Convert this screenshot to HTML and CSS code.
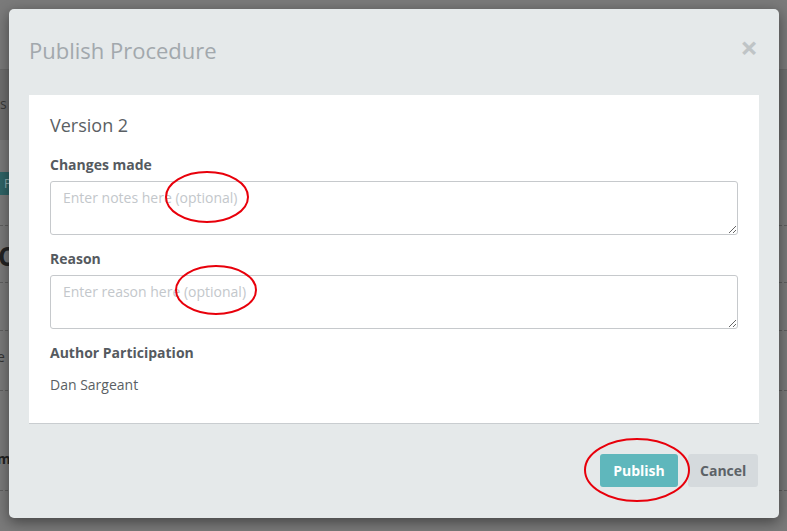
FILE: index.html
```
<!DOCTYPE html>
<html>
	<head>
		<meta charset="UTF-8">
		<title>Publish Procedure</title>
		<link rel="stylesheet" href="styles.css">
	</head>
	<body>
		<div class="page">
			<div class="page-top"></div>
			<div class="page-band"><span class="band-text">s</span></div>
			<div class="page-row row-btn"><span class="teal-btn">Pu</span></div>
			<div class="page-row row-big"><span class="big-c">C</span></div>
			<div class="page-row row-a"></div>
			<div class="page-row row-b"><span class="row-text">e</span></div>
			<div class="page-row row-c"><span class="row-text bold">m</span></div>
		</div>

		<div class="modal">
			<div class="modal-header">
				<h2 class="modal-title">Publish Procedure</h2>
				<span class="close">&times;</span>
			</div>
			<div class="modal-body">
				<h3 class="version">Version 2</h3>
				<label class="label">Changes made</label>
				<textarea class="field" placeholder="Enter notes here (optional)"></textarea>
				<label class="label">Reason</label>
				<textarea class="field" placeholder="Enter reason here (optional)"></textarea>
				<div class="label">Author Participation</div>
				<div class="author">Dan Sargeant</div>
			</div>
			<div class="modal-footer">
				<button class="btn btn-publish">Publish</button>
				<button class="btn btn-cancel">Cancel</button>
			</div>
		</div>

		<svg class="marks" width="787" height="531" viewBox="0 0 787 531">
			<ellipse cx="207" cy="197" rx="41" ry="25" />
			<ellipse cx="216" cy="290" rx="40" ry="24" />
			<ellipse cx="637" cy="470" rx="52" ry="31" />
		</svg>
	</body>
</html>
```

FILE: styles.css
```
html, body{
	margin: 0;
	padding: 0;
}
body{
	width: 787px;
	height: 531px;
	overflow: hidden;
	position: relative;
	background: #7a7a7a;
	font-family: "Open Sans", "Liberation Sans", sans-serif;
}

/* dimmed page behind the dialog */
.page{
	position: absolute;
	left: 0;
	top: 0;
	width: 787px;
	height: 531px;
}
.page-top{
	height: 69px;
	border-bottom: 1px solid #6a6a6a;
}
.page-band{
	height: 70px;
	background: #6f6f6f;
	position: relative;
}
.band-text{
	position: absolute;
	left: 0;
	top: 24px;
	font-size: 14px;
	color: #3a3a3a;
}
.page-row{
	position: relative;
	border-bottom: 1px dashed #5e5e5e;
}
.row-btn{
	height: 85px;
}
.teal-btn{
	position: absolute;
	left: -2px;
	top: 32px;
	height: 23px;
	line-height: 23px;
	padding: 0 6px;
	background: #2f6466;
	color: #8fb0b1;
	font-size: 12px;
}
.row-big{
	height: 56px;
}
.big-c{
	position: absolute;
	left: -2px;
	top: 12px;
	font-size: 26px;
	font-weight: bold;
	color: #222;
}
.row-a{
	height: 47px;
}
.row-b{
	height: 59px;
}
.row-text{
	position: absolute;
	left: -3px;
	top: 16px;
	font-size: 14px;
	color: #333;
}
.row-text.bold{
	top: 58px;
	font-weight: bold;
	color: #222;
}
.row-c{
	height: 99px;
}

/* dialog */
.modal{
	position: absolute;
	left: 9px;
	top: 9px;
	width: 770px;
	height: 509px;
	background: #e5e9ea;
	border-radius: 5px;
	box-shadow: 0 4px 14px rgba(0,0,0,0.45);
	display: flex;
	flex-direction: column;
}
.modal-header{
	height: 86px;
	padding: 0 20px;
	display: flex;
	align-items: center;
	justify-content: space-between;
	box-sizing: border-box;
}
.modal-title{
	margin: 0 0 4px 0;
	font-size: 22px;
	font-weight: normal;
	color: #a2a8ad;
}
.close{
	font-size: 31px;
	font-weight: bold;
	color: #bfc4c6;
	line-height: 1;
	margin: 0 1px 10px 0;
}
.modal-body{
	margin: 0 20px;
	background: #fff;
	padding: 20px 21px 28px;
	border-bottom: 1px solid #c9cdd0;
	display: flex;
	flex-direction: column;
}
.version{
	margin: 0 0 20px;
	font-size: 18px;
	line-height: 20px;
	font-weight: normal;
	color: #5a5f64;
}
.label{
	font-size: 14px;
	line-height: 20px;
	font-weight: bold;
	color: #555a5f;
	margin-bottom: 6px;
}
.field{
	height: 54px;
	box-sizing: border-box;
	border: 1px solid #c6c9cc;
	border-radius: 3px;
	padding: 6px 12px;
	font-family: "Open Sans", "Liberation Sans", sans-serif;
	font-size: 14px;
	line-height: 20px;
	margin: 0 0 14px;
	resize: vertical;
}
.field::placeholder{
	color: #c3c7cb;
}
.author{
	margin-top: 6px;
	font-size: 14px;
	line-height: 20px;
	color: #5a5f64;
}
.modal-footer{
	flex: 1;
	display: flex;
	justify-content: flex-end;
	align-items: flex-start;
	gap: 10px;
	padding: 30px 21px 0 0;
}
.btn{
	height: 33px;
	border: none;
	border-radius: 3px;
	font-family: "Open Sans", "Liberation Sans", sans-serif;
	font-size: 14px;
	font-weight: bold;
	padding: 0 12px;
}
.btn-publish{
	width: 78px;
	background: #5fb7bc;
	color: #fff;
}
.btn-cancel{
	width: 70px;
	background: #d5dadd;
	color: #5c6267;
}

/* red annotation marks */
.marks{
	position: absolute;
	left: 0;
	top: 0;
	pointer-events: none;
}
.marks ellipse{
	fill: none;
	stroke: #e8000b;
	stroke-width: 2;
}
```
